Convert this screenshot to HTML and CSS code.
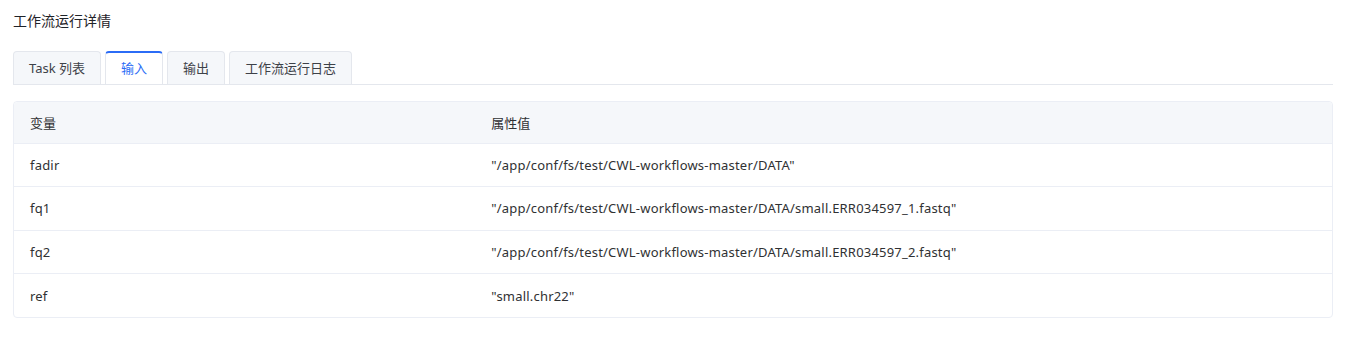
FILE: index.html
```html
<!DOCTYPE html>
<html lang="zh">
<head>
<meta charset="utf-8">
<title>工作流运行详情</title>
<link rel="stylesheet" href="styles.css">
</head>
<body>
<div class="page">
  <div class="title">工作流运行详情</div>
  <div class="tabs">
    <div class="tab">Task 列表</div>
    <div class="tab active">输入</div>
    <div class="tab">输出</div>
    <div class="tab">工作流运行日志</div>
  </div>
  <table class="grid">
    <thead>
      <tr><th class="c1">变量</th><th>属性值</th></tr>
    </thead>
    <tbody>
      <tr><td class="c1">fadir</td><td>"/app/conf/fs/test/CWL-workflows-master/DATA"</td></tr>
      <tr><td class="c1">fq1</td><td>"/app/conf/fs/test/CWL-workflows-master/DATA/small.ERR034597_1.fastq"</td></tr>
      <tr><td class="c1">fq2</td><td>"/app/conf/fs/test/CWL-workflows-master/DATA/small.ERR034597_2.fastq"</td></tr>
      <tr><td class="c1">ref</td><td>"small.chr22"</td></tr>
    </tbody>
  </table>
</div>
</body>
</html>
```
FILE: styles.css
```css
html, body {
  margin: 0;
  padding: 0;
  background: #ffffff;
}
body {
  font-family: "Noto Sans", "Noto Sans CJK SC", sans-serif;
  color: #303133;
}
.page {
  padding: 11px 14px 0 13px;
}
.title {
  font-size: 14px;
  line-height: 20px;
  color: #1f2329;
}
.tabs {
  margin-top: 20px;
  display: flex;
  gap: 4px;
  border-bottom: 1px solid #e4e7ed;
}
.tab {
  box-sizing: border-box;
  height: 33px;
  padding: 0 15px;
  border: 1px solid #e4e7ed;
  border-bottom: none;
  border-radius: 4px 4px 0 0;
  background: #f5f7fa;
  font-size: 13px;
  line-height: 32px;
  color: #3d4148;
}
.tab.active {
  background: #ffffff;
  border-top: 2px solid #2b6cf6;
  line-height: 31px;
  color: #2b6cf6;
}
.grid {
  margin-top: 16px;
  width: 100%;
  border: 1px solid #ebeef5;
  border-radius: 4px;
  border-collapse: separate;
  border-spacing: 0;
  font-size: 13px;
  color: #303133;
}
.grid th {
  background: #f5f7fa;
  font-weight: normal;
  text-align: left;
  height: 42px;
  padding: 0 16px;
  border-bottom: 1px solid #ebeef5;
  box-sizing: border-box;
}
.grid th:first-child { border-top-left-radius: 4px; }
.grid th:last-child { border-top-right-radius: 4px; }
.grid td {
  height: 43.3px;
  padding: 0 16px;
  border-bottom: 1px solid #ebeef5;
  box-sizing: border-box;
  letter-spacing: 0.2px;
}
.grid tbody tr:last-child td {
  border-bottom: none;
}
.grid .c1 {
  width: 35%;
}
```
